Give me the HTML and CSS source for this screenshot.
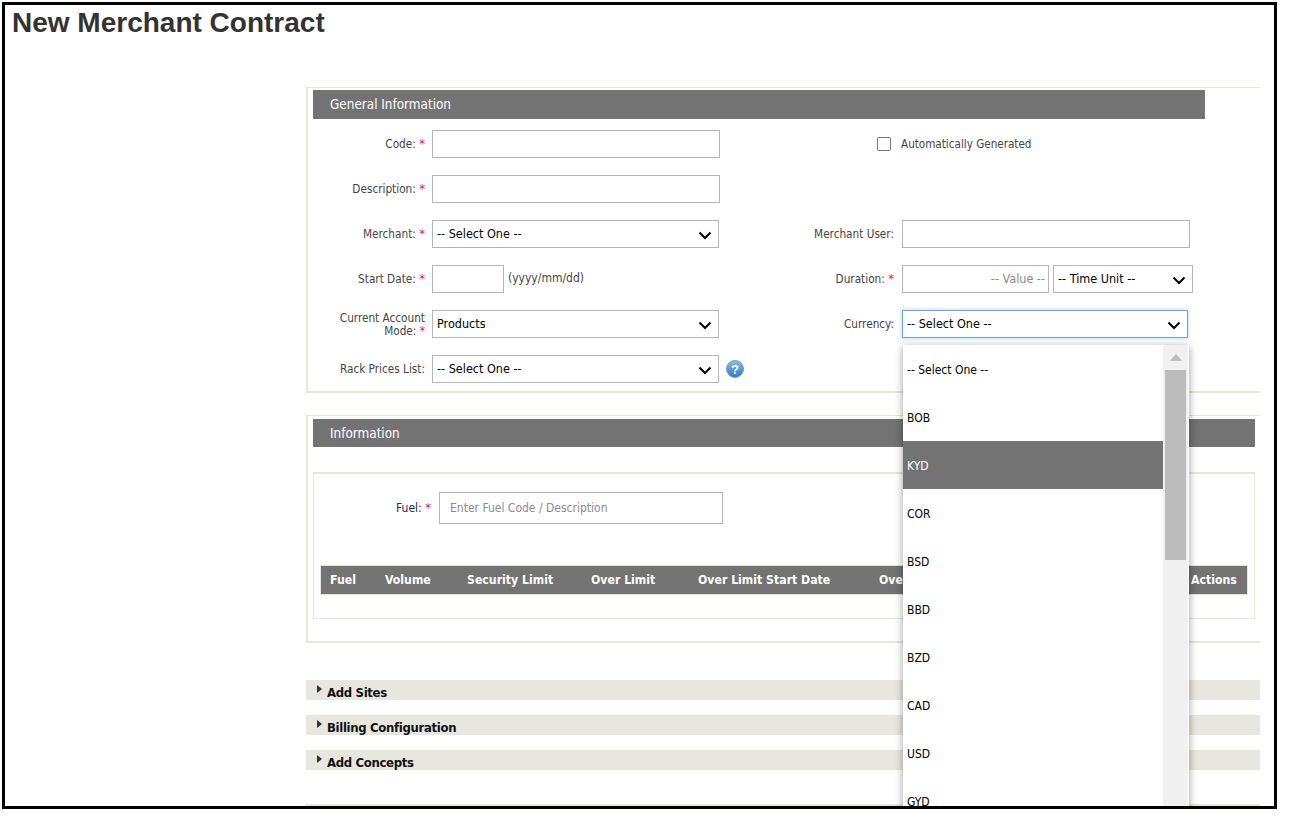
FILE: index.html
```html
<!DOCTYPE html>
<html lang="en">
<head>
    <meta charset="UTF-8">
    <meta name="viewport" content="width=device-width, initial-scale=1.0">
    <title>New Merchant Contract</title>
    <link rel="stylesheet" href="styles.css">
</head>
<body>
<div class="frame">
    <h1 class="page-title">New Merchant Contract</h1>

    <div class="content">
        <div class="section section-general">
            <div class="section-header header-general">General Information</div>
            <div class="form-grid">
                <label class="field-label">Code: <span class="req">*</span></label>
                <input class="text-input" type="text">
                <div class="check-cell"><input class="check-box" type="checkbox"></div>
                <div class="check-text">Automatically Generated</div>

                <label class="field-label">Description: <span class="req">*</span></label>
                <input class="text-input" type="text">
                <div></div>
                <div></div>

                <label class="field-label">Merchant: <span class="req">*</span></label>
                <div class="select-box box-287">
                    <span>-- Select One --</span>
                    <svg class="chevron" width="14" height="9" viewBox="0 0 14 9"><path d="M1.5 1.5 L7 7 L12.5 1.5"/></svg>
                </div>
                <label class="field-label">Merchant User:</label>
                <input class="text-input right-control" type="text">

                <label class="field-label">Start Date: <span class="req">*</span></label>
                <div class="date-cell">
                    <input class="text-input date-input" type="text">
                    <span class="date-hint">(yyyy/mm/dd)</span>
                </div>
                <label class="field-label">Duration: <span class="req">*</span></label>
                <div class="duration-cell">
                    <input class="text-input value-input" type="text" placeholder="-- Value --">
                    <div class="select-box box-140">
                        <span>-- Time Unit --</span>
                        <svg class="chevron" width="14" height="9" viewBox="0 0 14 9"><path d="M1.5 1.5 L7 7 L12.5 1.5"/></svg>
                    </div>
                </div>

                <label class="field-label two-line">Current Account Mode: <span class="req">*</span></label>
                <div class="select-box box-287">
                    <span>Products</span>
                    <svg class="chevron" width="14" height="9" viewBox="0 0 14 9"><path d="M1.5 1.5 L7 7 L12.5 1.5"/></svg>
                </div>
                <label class="field-label">Currency:</label>
                <div class="select-box box-286 right-control focused">
                    <span>-- Select One --</span>
                    <svg class="chevron" width="14" height="9" viewBox="0 0 14 9"><path d="M1.5 1.5 L7 7 L12.5 1.5"/></svg>
                </div>

                <label class="field-label">Rack Prices List:</label>
                <div class="select-box box-287">
                    <span>-- Select One --</span>
                    <svg class="chevron" width="14" height="9" viewBox="0 0 14 9"><path d="M1.5 1.5 L7 7 L12.5 1.5"/></svg>
                </div>
                <div class="help-cell">
                    <svg width="18" height="18" viewBox="0 0 18 18">
                        <defs>
                            <linearGradient id="helpFill" x1="0" y1="0" x2="0" y2="1">
                                <stop offset="0" stop-color="#8fbbe2"/>
                                <stop offset="1" stop-color="#2f79bd"/>
                            </linearGradient>
                        </defs>
                        <circle cx="9" cy="9" r="8.5" fill="url(#helpFill)" stroke="#6d9fc9"/>
                        <text x="9" y="13.5" text-anchor="middle" class="help-mark">?</text>
                    </svg>
                </div>
                <div></div>
            </div>
        </div>

        <div class="section section-info">
            <div class="section-header header-info">Information</div>
            <div class="inner-box">
                <div class="fuel-row">
                    <label class="fuel-label">Fuel: <span class="req">*</span></label>
                    <input class="text-input fuel-input" type="text" placeholder="Enter Fuel Code / Description">
                </div>
                <div class="table-head">
                    <span class="col-fuel">Fuel</span>
                    <span class="col-volume">Volume</span>
                    <span class="col-security">Security Limit</span>
                    <span class="col-over">Over Limit</span>
                    <span class="col-start">Over Limit Start Date</span>
                    <span class="col-end">Over Limit End Date</span>
                    <span class="col-actions">Actions</span>
                </div>
            </div>
        </div>

        <div class="fold-list">
            <div class="fold-bar"><span class="fold-arrow"></span>Add Sites</div>
            <div class="fold-bar"><span class="fold-arrow"></span>Billing Configuration</div>
            <div class="fold-bar"><span class="fold-arrow"></span>Add Concepts</div>
            <div class="fold-bar fold-cut"></div>
        </div>
    </div>

    <!-- open currency list, lies over the form -->
    <div class="currency-menu">
        <ul class="currency-list">
            <li>-- Select One --</li>
            <li>BOB</li>
            <li class="active">KYD</li>
            <li>COR</li>
            <li>BSD</li>
            <li>BBD</li>
            <li>BZD</li>
            <li>CAD</li>
            <li>USD</li>
            <li>GYD</li>
        </ul>
        <div class="menu-scroll">
            <div class="scroll-up"></div>
            <div class="scroll-thumb"></div>
        </div>
    </div>
</div>
</body>
</html>
```

FILE: styles.css
```css
* {
    box-sizing: border-box;
}
body {
    margin: 0;
    padding: 2px 0 0 2px;
    background: #ffffff;
    font-family: "DejaVu Sans Condensed", "Liberation Sans", sans-serif;
    font-size: 12px;
    color: #333333;
}
.frame {
    position: relative;
    width: 1275px;
    height: 807px;
    border: 3px solid #000000;
    overflow: hidden;
    background: #ffffff;
}
.page-title {
    margin: 0;
    padding: 1px 0 0 7px;
    height: 82px;
    font-family: "Liberation Sans", Arial, sans-serif;
    font-size: 28px;
    line-height: 33px;
    font-weight: bold;
    color: #333333;
}
.content {
    margin-left: 301px;
    width: 954px;
}
.section {
    border-top: 1px solid #e6e6dc;
    border-left: 2px solid #e6e6dc;
    border-bottom: 2px solid #e6e6dc;
    padding: 2px 0 0 5px;
}
.section-general {
    height: 306px;
}
.section-info {
    margin-top: 22px;
    height: 228px;
    padding-top: 3px;
}
.section-header {
    height: 28px;
    line-height: 28px;
    padding-left: 17px;
    background: #737373;
    color: #ffffff;
    font-size: 13.4px;
    margin-right: 5px;
}
.header-general {
    height: 29px;
    line-height: 29px;
    margin-right: 55px;
}
.header-info {
    line-height: 30px;
}
.form-grid {
    display: grid;
    grid-template-columns: 118px 288px 169px 1fr;
    grid-auto-rows: 28px;
    column-gap: 6px;
    row-gap: 17px;
    margin: 11px 0 0 -5px;
    align-items: center;
}
.field-label {
    text-align: right;
    line-height: 13px;
    font-size: 11.7px;
    padding-right: 1px;
    color: #444444;
}
.two-line {
    padding: 1px 1px 0 20px;
}
.req {
    color: #e8174a;
    font-size: 13px;
    line-height: 12px;
}
.two-line .req {
    font-size: 11.7px;
}
.text-input {
    display: block;
    width: 288px;
    height: 28px;
    border: 1px solid #b5b5b5;
    background: #ffffff;
    padding: 0 5px;
    font: inherit;
    color: #000000;
    outline: none;
    border-radius: 0;
}
.text-input::placeholder {
    color: #8a8a8a;
    opacity: 1;
}
.right-control {
    margin-left: 1px;
}
.select-box {
    display: flex;
    align-items: center;
    justify-content: space-between;
    height: 28px;
    border: 1px solid #b5b5b5;
    background: #ffffff;
    padding: 0 6px 2px 4px;
    font-size: 12.5px;
    color: #000000;
}
.box-287 {
    width: 287px;
}
.box-286 {
    width: 286px;
}
.box-140 {
    width: 140px;
}
.focused {
    border-color: #6ba2e6;
    box-shadow: 0 0 4px rgba(107, 162, 230, 0.55);
}
.chevron {
    flex: none;
    fill: none;
    stroke: #000000;
    stroke-width: 2;
    margin-top: 4px;
}
.check-cell {
    display: flex;
    justify-content: flex-end;
    padding-right: 4px;
}
.check-box {
    appearance: none;
    width: 14px;
    height: 14px;
    margin: 0;
    border: 1px solid #767676;
    border-radius: 2px;
    background: #ffffff;
}
.check-text {
    font-size: 11.6px;
    color: #444444;
}
.date-cell {
    display: flex;
    align-items: center;
    gap: 4px;
}
.date-input {
    width: 72px;
}
.date-hint {
    margin-top: -2px;
    color: #444444;
}
.duration-cell {
    display: flex;
    gap: 4px;
    margin-left: 1px;
}
.value-input {
    width: 147px;
    text-align: right;
    padding: 0 3px 2px 5px;
    font-size: 12.5px;
}
.help-cell {
    height: 18px;
}
.help-mark {
    font-family: "Liberation Sans", sans-serif;
    font-size: 13px;
    font-weight: bold;
    fill: #ffffff;
}
.inner-box {
    height: 147px;
    margin: 25px 5px 0 0;
    border: 2px solid #e6e6dc;
    border-width: 2px 1px 1px 1px;
    padding: 18px 6px 0 6px;
}
.fuel-row {
    display: flex;
    align-items: center;
    gap: 8px;
    height: 32px;
}
.fuel-label {
    width: 111px;
    text-align: right;
    color: #1f2a55;
}
.fuel-input {
    width: 284px;
    height: 32px;
    padding-left: 10px;
}
.table-head {
    height: 30px;
    margin-top: 41px;
    background: #737373;
    border: 1px solid #e6e6dc;
    color: #ffffff;
    font-size: 12.2px;
    font-weight: bold;
    line-height: 28px;
    white-space: nowrap;
    display: flex;
}
.table-head span {
    flex: none;
}
.col-fuel {
    width: 64px;
    padding-left: 9px;
}
.col-volume {
    width: 82px;
}
.col-security {
    width: 124px;
}
.col-over {
    width: 107px;
}
.col-start {
    width: 181px;
}
.col-end {
    width: 312px;
}
.fold-list {
    margin-top: 37px;
}
.fold-bar {
    position: relative;
    height: 20px;
    margin-bottom: 15px;
    padding-left: 21px;
    background: #e7e7df;
    color: #111111;
    font-weight: bold;
    font-size: 13px;
    letter-spacing: -0.33px;
    line-height: 25px;
}
.fold-cut {
    margin-top: 34px;
}
.fold-arrow {
    position: absolute;
    left: 11px;
    top: 5px;
    border-left: 5px solid #333333;
    border-top: 4px solid transparent;
    border-bottom: 4px solid transparent;
}
.currency-menu {
    position: absolute;
    left: 898px;
    top: 340px;
    width: 286px;
    height: 480px;
    background: #ffffff;
    display: flex;
    box-shadow: 0 2px 8px rgba(0, 0, 0, 0.4);
}
.currency-list {
    list-style: none;
    margin: 0;
    padding: 0;
    width: 260px;
    color: #000000;
}
.currency-list li {
    height: 48px;
    line-height: 50px;
    padding-left: 4px;
}
.currency-list .active {
    background: #737373;
    color: #ffffff;
}
.menu-scroll {
    width: 25px;
    background: #f0f0f0;
    padding-left: 2px;
}
.scroll-up {
    width: 21px;
    height: 25px;
    position: relative;
}
.scroll-up::after {
    content: "";
    position: absolute;
    left: 5px;
    top: 9px;
    border-left: 6px solid transparent;
    border-right: 6px solid transparent;
    border-bottom: 7px solid #bcbcbc;
}
.scroll-thumb {
    width: 21px;
    height: 190px;
    background: #bcbcbc;
}
```
